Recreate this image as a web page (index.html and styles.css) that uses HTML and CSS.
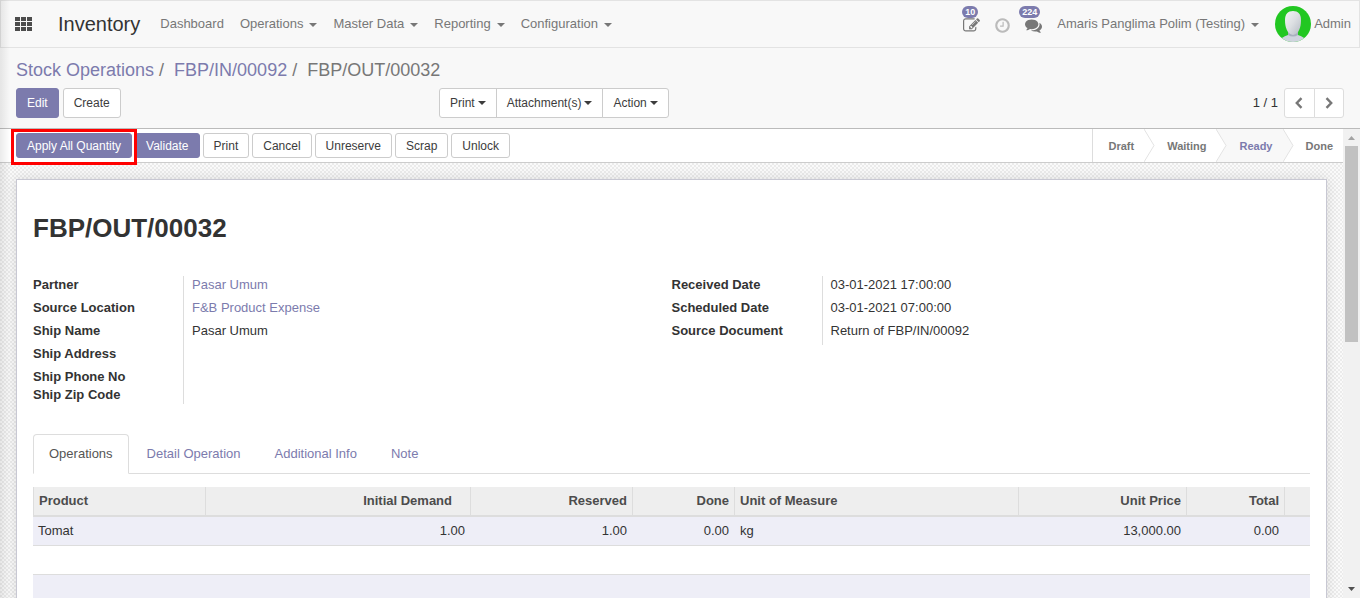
FILE: index.html
```html
<!DOCTYPE html>
<html lang="en">
<head>
<meta charset="utf-8">
<title>FBP/OUT/00032 - Inventory</title>
<link rel="stylesheet" href="styles.css">
</head>
<body>
<header class="navbar">
  <button class="apps" aria-label="Applications">
    <svg width="17" height="14" viewBox="0 0 17 14" fill="#4c4c4c"><path d="M0 0h5v4H0zM6 0h5v4H6zM12 0h5v4h-5zM0 5h5v4H0zM6 5h5v4H6zM12 5h5v4h-5zM0 10h5v4H0zM6 10h5v4H6zM12 10h5v4h-5z"/></svg>
  </button>
  <a class="brand" href="#">Inventory</a>
  <nav class="menu">
    <a href="#">Dashboard</a>
    <a href="#">Operations<span class="caret"></span></a>
    <a href="#">Master Data<span class="caret"></span></a>
    <a href="#">Reporting<span class="caret"></span></a>
    <a href="#">Configuration<span class="caret"></span></a>
  </nav>
  <div class="systray">
    <button class="tray" aria-label="Notes">
      <svg width="17" height="17" viewBox="0 0 1792 1792" fill="#777"><path d="M888 1184l116-116-152-152-116 116v56h96v96h56zm440-720q-16-16-33 1l-350 350q-17 17-1 33t33-1l350-350q17-17 1-33zm80 594v190q0 119-84.500 203.500t-203.500 84.500h-832q-119 0-203.500-84.500t-84.500-203.500v-832q0-119 84.500-203.500t203.500-84.500h832q63 0 117 25 15 7 18 23 3 17-9 29l-49 49q-14 14-32 8-23-6-45-6h-832q-66 0-113 47t-47 113v832q0 66 47 113t113 47h832q66 0 113-47t47-113v-126q0-13 9-22l64-64q15-15 35-7t20 29zm-96-738l288 288-672 672h-288v-288zm444 132l-92 92-288-288 92-92q28-28 68-28t68 28l152 152q28 28 28 68t-28 68z"/></svg>
      <span class="badge">10</span>
    </button>
    <button class="tray" aria-label="Activities">
      <svg width="17" height="17" viewBox="0 0 1792 1792" fill="#bbb"><path d="M1024 544v448q0 14-9 23t-23 9h-320q-14 0-23-9t-9-23v-64q0-14 9-23t23-9h224v-352q0-14 9-23t23-9h64q14 0 23 9t9 23zm416 352q0-148-73-273t-198-198-273-73-273 73-198 198-73 273 73 273 198 198 273 73 273-73 198-198 73-273zm224 0q0 209-103 385.500t-279.500 279.500-385.500 103-385.500-103-279.500-279.500-103-385.500 103-385.500 279.500-279.500 385.500-103 385.500 103 279.500 279.500 103 385.500z"/></svg>
    </button>
    <button class="tray" aria-label="Messages">
      <svg width="17" height="17" viewBox="0 0 1792 1792" fill="#777"><path d="M1408 768q0 139-94 257t-256.500 186.500-353.500 68.500q-86 0-176-16-124 88-278 128-36 9-86 16h-3q-11 0-20.500-8t-11.500-21q-1-3-1-6.500t.5-6.500 2-6l2.500-5 3.500-5.500 4-5 4.500-5 4-4.500q5-6 23-25t26-29.500 22.500-29 25-38.500 20.500-44q-124-72-195-177t-71-224q0-139 94-257t256.500-186.500 353.500-68.500 353.500 68.500 256.500 186.500 94 257zm384 256q0 120-71 224.500t-195 176.500q10 24 20.500 44t25 38.500 22.500 29 26 29.500 23 25q1 1 4 4.500t4.500 5 4 5 3.500 5.500l2.500 5 2 6 .5 6.500-1 6.500q-3 14-13 22t-22 7q-50-7-86-16-154-40-278-128-90 16-176 16-271 0-472-132 58 4 88 4 161 0 309-45t264-129q125-92 192-212t67-254q0-77-23-152 129 71 204 178t75 230z"/></svg>
      <span class="badge">224</span>
    </button>
  </div>
  <a class="company" href="#">Amaris Panglima Polim (Testing)<span class="caret"></span></a>
  <a class="user" href="#">
    <svg width="36" height="36" viewBox="0 0 36 36">
      <defs>
        <clipPath id="round"><circle cx="18" cy="18" r="18"/></clipPath>
        <linearGradient id="head" x1="0" y1="0" x2="1" y2="1"><stop offset="0" stop-color="#f4f5f6"/><stop offset=".5" stop-color="#dcdfe2"/><stop offset="1" stop-color="#b4bac4"/></linearGradient>
      </defs>
      <g clip-path="url(#round)">
        <rect width="36" height="36" fill="#22c722"/>
        <path d="M4 36q2-5 9-7h10q7 2 9 7z" fill="#cfd4de"/>
        <path d="M13 26h10v3q-5 3-10 0z" fill="#a9b0bf"/>
        <path d="M18 5c-5 0-8 3-8 9 0 7 2 14 8 15 6-1 8-8 8-15 0-6-3-9-8-9z" fill="url(#head)"/>
      </g>
    </svg>
    Admin
  </a>
</header>

<section class="control">
  <nav class="crumbs">
    <a href="#">Stock Operations</a><span class="sep">/</span><a href="#">FBP/IN/00092</a><span class="sep">/</span><span>FBP/OUT/00032</span>
  </nav>
  <div class="toolbar">
    <div class="actions">
      <button class="btn primary">Edit</button>
      <button class="btn">Create</button>
    </div>
    <div class="middle">
      <div class="group">
        <button class="btn">Print<span class="caret"></span></button>
        <button class="btn">Attachment(s)<span class="caret"></span></button>
        <button class="btn">Action<span class="caret"></span></button>
      </div>
      <div class="pager">
        <span>1 / 1</span>
        <div class="group light">
          <button class="btn" aria-label="Previous"><svg width="9" height="12" viewBox="0 0 9 12" fill="none" stroke="#777" stroke-width="2.400"><path d="M6.500 1.200 1.800 6l4.700 4.800"/></svg></button>
          <button class="btn" aria-label="Next"><svg width="8" height="12" viewBox="0 0 8 12" fill="none" stroke="#777" stroke-width="2.400"><path d="M1.500 1.200 6.200 6l-4.700 4.800"/></svg></button>
        </div>
      </div>
    </div>
  </div>
</section>

<div class="content">
  <main class="view">
    <div class="statusbar">
      <div class="status-buttons">
        <button class="btn primary marked">Apply All Quantity</button>
        <button class="btn primary">Validate</button>
        <button class="btn">Print</button>
        <button class="btn">Cancel</button>
        <button class="btn">Unreserve</button>
        <button class="btn">Scrap</button>
        <button class="btn">Unlock</button>
      </div>
      <ol class="steps">
        <li>Draft<svg class="arrow" width="11" height="33" viewBox="0 0 11 33"><path d="M0 0 10 16.500 0 33" fill="#fff" stroke="#e3e3e3"/></svg></li>
        <li>Waiting<svg class="arrow" width="11" height="33" viewBox="0 0 11 33"><path d="M0 0 10 16.500 0 33" fill="#fff" stroke="#e3e3e3"/></svg></li>
        <li class="current">Ready<svg class="arrow" width="11" height="33" viewBox="0 0 11 33"><path d="M0 0 10 16.500 0 33" fill="#f8f8f8" stroke="#e3e3e3"/></svg></li>
        <li>Done</li>
      </ol>
    </div>
    <article class="sheet">
      <h1>FBP/OUT/00032</h1>
      <div class="fields">
        <dl>
          <dt>Partner</dt><dd><a href="#">Pasar Umum</a></dd>
          <dt>Source Location</dt><dd><a href="#">F&amp;B Product Expense</a></dd>
          <dt>Ship Name</dt><dd>Pasar Umum</dd>
          <dt>Ship Address</dt><dd></dd>
          <dt class="short">Ship Phone No</dt><dd class="short"></dd>
          <dt class="short">Ship Zip Code</dt><dd class="short"></dd>
        </dl>
        <dl>
          <dt>Received Date</dt><dd>03-01-2021 17:00:00</dd>
          <dt>Scheduled Date</dt><dd>03-01-2021 07:00:00</dd>
          <dt>Source Document</dt><dd>Return of FBP/IN/00092</dd>
        </dl>
      </div>
      <nav class="tabs">
        <a class="active" href="#">Operations</a>
        <a href="#">Detail Operation</a>
        <a href="#">Additional Info</a>
        <a href="#">Note</a>
      </nav>
      <table class="lines">
        <colgroup><col class="c-product"><col class="c-demand"><col class="c-reserved"><col class="c-done"><col><col class="c-price"><col class="c-total"><col class="c-trash"></colgroup>
        <thead>
          <tr><th>Product</th><th class="num sortable">Initial Demand</th><th class="num">Reserved</th><th class="num">Done</th><th>Unit of Measure</th><th class="num">Unit Price</th><th class="num">Total</th><th></th></tr>
        </thead>
        <tbody>
          <tr><td>Tomat</td><td class="num">1.00</td><td class="num">1.00</td><td class="num">0.00</td><td>kg</td><td class="num">13,000.00</td><td class="num">0.00</td><td></td></tr>
          <tr><td colspan="8"></td></tr>
          <tr><td colspan="8"></td></tr>
          <tr><td colspan="8"></td></tr>
        </tbody>
      </table>
    </article>
  </main>
  <div class="scrollbar">
    <svg width="17" height="17" viewBox="0 0 17 17"><path d="M5 11h7L8.500 7z" fill="#a3a3a3"/></svg>
    <div class="track"><div class="thumb"></div></div>
    <svg width="17" height="17" viewBox="0 0 17 17"><path d="M5 6h7l-3.500 4z" fill="#505050"/></svg>
  </div>
</div>
</body>
</html>
```
FILE: styles.css
```css
* { box-sizing: border-box; }

body {
  margin: 0;
  height: 100vh;
  display: flex;
  flex-direction: column;
  overflow: hidden;
  background: #f8f8f8;
  color: #333;
  font: 13px/18px "Liberation Sans", Arial, sans-serif;
}

/* soft shade along the window's left edge */
body::after {
  content: "";
  position: absolute;
  inset: 0 auto 0 0;
  width: 10px;
  background: linear-gradient(to right, rgba(0, 0, 0, .08), rgba(0, 0, 0, 0));
  pointer-events: none;
}

a { color: #7c7bad; text-decoration: none; }
button { font: inherit; color: inherit; cursor: pointer; }
svg { display: block; flex: none; }

.caret {
  display: inline-block;
  margin-left: 6px;
  vertical-align: middle;
  border: 4px solid transparent;
  border-top-color: currentColor;
  border-bottom: 0;
}

.navbar {
  flex: none;
  height: 48px;
  display: flex;
  align-items: center;
  padding: 0 8px 0 14px;
  border: 1px solid #e3e3e3;
}
.navbar a { color: #777; }
.apps { padding: 0; border: 0; background: none; }
.navbar .brand { margin: 0 20px 0 26px; color: #333; font-size: 20px; line-height: 24px; }
.menu { display: flex; gap: 16px; }

.systray { display: flex; gap: 14px; margin-left: auto; padding-top: 2px; }
.tray { position: relative; padding: 0; border: 0; background: none; }
.badge {
  position: absolute;
  right: 2px;
  bottom: 16px;
  padding: 0 3px;
  border-radius: 6px;
  background: #7c7bad;
  color: #fff;
  font-size: 9px;
  font-weight: bold;
  line-height: 12px;
}
.company { margin: 0 16px 0 15px; }
.user { display: flex; align-items: center; gap: 3px; }

.control { flex: none; padding: 12px 16px 10px; border-bottom: 1px solid #bbb; }
.crumbs { font-size: 18px; line-height: 20px; color: #777; }
.sep { margin: 0 10px 0 5px; }
.toolbar { display: grid; grid-template-columns: 423px 1fr; margin-top: 8px; }
.actions { display: flex; gap: 4px; }
.middle { display: flex; justify-content: space-between; }
.group { display: flex; }
.group .btn + .btn { margin-left: -1px; }
.group .btn:not(:last-child) { border-top-right-radius: 0; border-bottom-right-radius: 0; }
.group .btn:not(:first-child) { border-top-left-radius: 0; border-bottom-left-radius: 0; }
.group .caret { margin-left: 3px; }
.pager { display: flex; align-items: center; gap: 6px; }

.btn {
  display: flex;
  align-items: center;
  height: 30px;
  padding: 0 10px;
  border: 1px solid #ccc;
  border-radius: 3px;
  background: #fff;
  color: #3c3c3c;
  font-size: 12px;
}
.btn.primary { background: #7c7bad; border-color: #7c7bad; color: #fff; }
.light .btn { border-color: #ddd; }

.content { flex: 1; min-height: 0; display: flex; }
.view {
  flex: 1;
  min-width: 0;
  overflow: hidden;
  background: repeating-conic-gradient(#ebebeb 0 25%, #fafafa 0 50%) 0 0 / 4px 4px;
}

.statusbar {
  display: flex;
  justify-content: space-between;
  height: 34px;
  padding-left: 16px;
  border-bottom: 1px solid #ccc;
  background: #fff;
}
.status-buttons { display: flex; align-items: center; gap: 3px; }
.status-buttons .btn { height: 25px; }

/* red frame drawn round the highlighted action */
.marked { position: relative; z-index: 1; }
.marked::after {
  content: "";
  position: absolute;
  inset: -5px -6px -8px;
  border: 3px solid #f00;
}

.steps {
  display: flex;
  margin: 0;
  padding: 0;
  list-style: none;
  border-left: 1px solid #ddd;
  font-size: 11px;
  font-weight: bold;
  line-height: 34px;
  color: #777;
}
.steps li { position: relative; height: 33px; padding: 0 10px 0 23px; }
.steps li:first-child { padding-left: 15px; }
.steps .current { background: #f8f8f8; color: #7c7bad; }
.arrow { position: absolute; top: 0; left: 100%; z-index: 1; }

.sheet {
  margin: 16px 16px 0;
  padding: 32px 16px;
  border: 1px solid #c8c8d3;
  background: #fff;
  box-shadow: 0 0 12px rgba(0, 0, 0, .12);
}
h1 { margin: 0 0 32px; font-size: 26px; line-height: 32px; }

.fields { display: grid; grid-template-columns: 1fr 1fr; align-items: start; }
dl { display: grid; grid-template-columns: 150px 1fr; margin: 0; }
dt { padding-bottom: 5px; font-weight: bold; }
dd { margin: 0; padding: 0 0 5px 8px; border-left: 1px solid #ddd; }
dt.short, dd.short { padding-bottom: 0; }

.tabs { display: flex; gap: 2px; margin-top: 30px; border-bottom: 1px solid #ddd; }
.tabs a { padding: 10px 15px; border: 1px solid transparent; margin-bottom: -1px; border-radius: 4px 4px 0 0; }
.tabs .active { color: #555; background: #fff; border-color: #ddd #ddd #fff; }

.lines { width: 100%; margin-top: 13px; border-collapse: separate; border-spacing: 0; table-layout: fixed; }
.c-product { width: 173px; }
.c-demand { width: 265px; }
.c-reserved { width: 162px; }
.c-done { width: 102px; }
.c-price { width: 168px; }
.c-total { width: 98px; }
.c-trash { width: 25px; }
.lines th {
  height: 30px;
  padding: 0 5px;
  border-right: 1px solid #ddd;
  border-bottom: 2px solid #ddd;
  background: #eee;
  color: #4c4c4c;
  text-align: left;
}
.lines th:first-child { border-left: 1px solid #ddd; }
.lines th:last-child { border-right: 0; }
.lines td { height: 29px; padding: 0 6px 0 5px; border-bottom: 1px solid #ddd; }
.lines tbody tr:nth-child(odd) { background: #eeeef7; }
.lines .num { text-align: right; }
.lines .sortable { padding-right: 18px; }

.scrollbar { flex: none; width: 17px; display: flex; flex-direction: column; background: #f1f1f1; }
.track { flex: 1; padding: 0 2px; }
.thumb { height: 45%; background: #c1c1c1; }
```
